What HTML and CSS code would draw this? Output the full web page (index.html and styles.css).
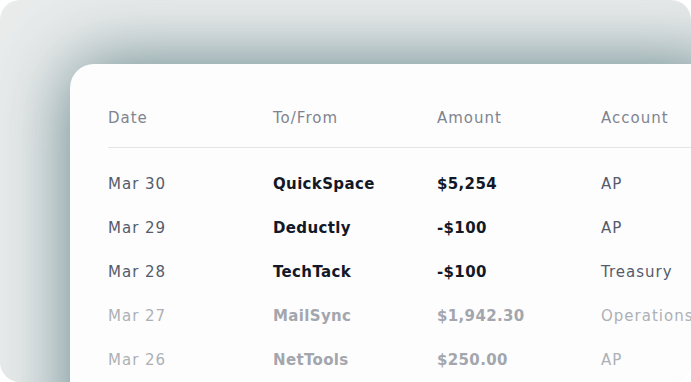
FILE: index.html
```html
<!DOCTYPE html>
<html lang="en">
<head>
<meta charset="utf-8">
<title>Transactions</title>
<link rel="stylesheet" href="styles.css">
</head>
<body>
<div class="frame">
  <div class="card">
    <div class="head">
      <span>Date</span><span>To/From</span><span>Amount</span><span>Account</span>
    </div>
    <div class="rows">
      <div class="row"><span class="date">Mar 30</span><span class="name">QuickSpace</span><span class="amt">$5,254</span><span class="acct">AP</span></div>
      <div class="row"><span class="date">Mar 29</span><span class="name">Deductly</span><span class="amt">-$100</span><span class="acct">AP</span></div>
      <div class="row"><span class="date">Mar 28</span><span class="name">TechTack</span><span class="amt">-$100</span><span class="acct">Treasury</span></div>
      <div class="row faded"><span class="date">Mar 27</span><span class="name">MailSync</span><span class="amt">$1,942.30</span><span class="acct">Operations</span></div>
      <div class="row faded"><span class="date">Mar 26</span><span class="name">NetTools</span><span class="amt">$250.00</span><span class="acct">AP</span></div>
    </div>
  </div>
</div>
</body>
</html>
```
FILE: styles.css
```css
html, body {
  margin: 0;
  padding: 0;
  background: #ffffff;
}
body {
  font-family: "DejaVu Sans", "Liberation Sans", sans-serif;
  font-size: 15px;
}
.frame {
  width: 691px;
  height: 382px;
  border-radius: 20px;
  background: #eaecec;
  overflow: hidden;
  padding: 64px 0 0 70px;
  box-sizing: border-box;
}
.card {
  background: #fdfdfd;
  border-top-left-radius: 24px;
  width: 660px;
  height: 400px;
  padding-left: 38px;
  box-sizing: border-box;
  box-shadow: 0 0 75px 0 rgba(70, 110, 118, 0.85);
}
.head, .row {
  display: grid;
  grid-template-columns: 165px 164px 164px 1fr;
  line-height: 20px;
  white-space: nowrap;
}
.head {
  padding: 44px 0 19px;
  border-bottom: 1px solid #e3e5e9;
  color: #7f8490;
  font-weight: 400;
  letter-spacing: 1px;
}
.rows {
  padding-top: 14px;
}
.row {
  height: 44px;
  align-items: center;
}
.date, .acct {
  color: #555b6a;
  font-weight: 400;
  letter-spacing: 1px;
}
.name, .amt {
  color: #121827;
  font-weight: 700;
  letter-spacing: 0.35px;
}
.faded .date, .faded .acct {
  color: #adb0b6;
}
.faded .name, .faded .amt {
  color: #a3a6ad;
}
```
